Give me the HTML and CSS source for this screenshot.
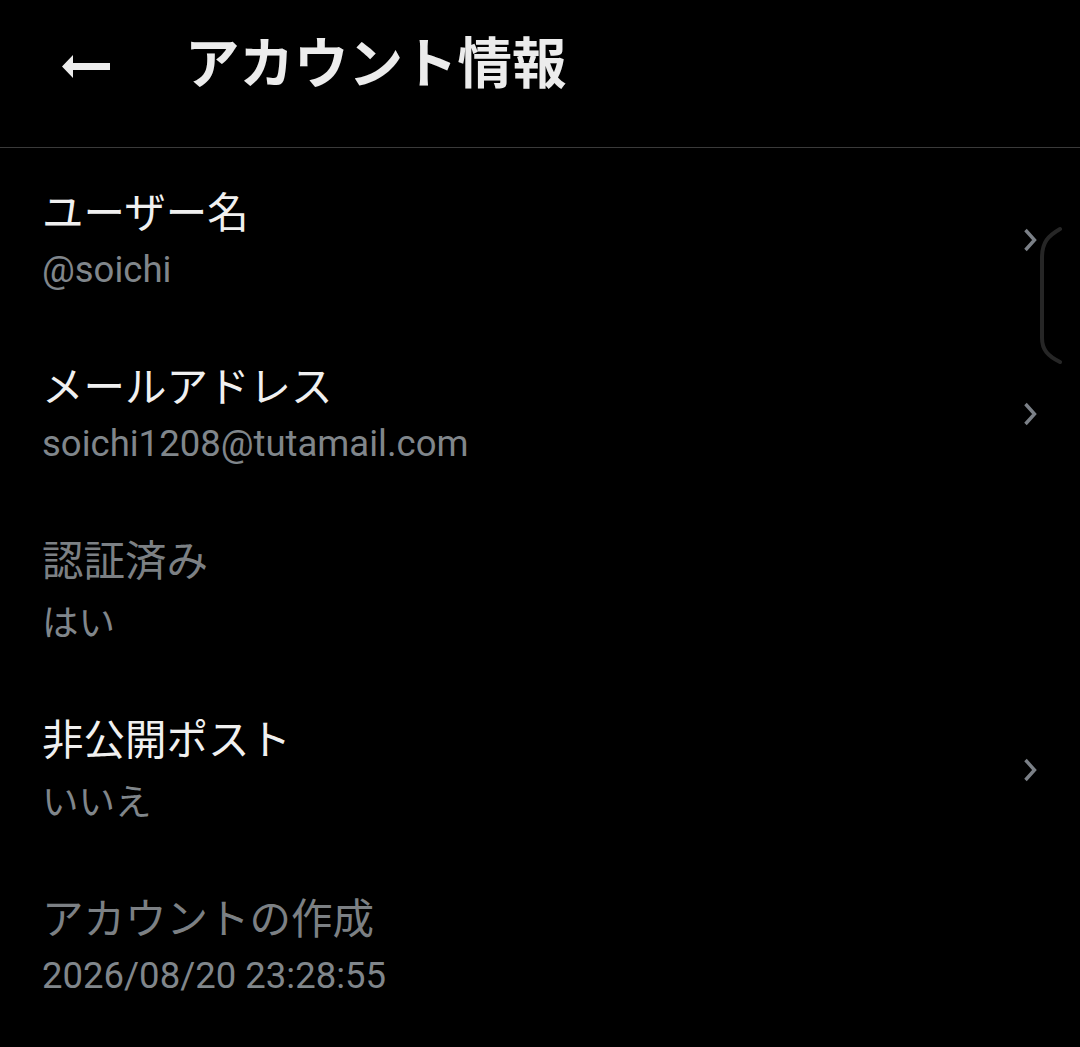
FILE: index.html
```html
<!DOCTYPE html>
<html lang="ja">
<head>
<meta charset="utf-8">
<title>アカウント情報</title>
<link rel="stylesheet" href="styles.css">
</head>
<body>
<div class="screen">
  <header class="appbar">
    <button class="back" aria-label="戻る">
      <svg width="48" height="24" viewBox="0 0 48 24"><path d="M0 11.5 L11 0 L11 8 L48 8 L48 15 L11 15 L11 23 Z" fill="#ececec"/></svg>
    </button>
    <h1 class="appbar-title">アカウント情報</h1>
  </header>
  <ul class="list">
    <li class="row">
      <div class="text">
        <div class="label">ユーザー名</div>
        <div class="value">@soichi</div>
      </div>
      <svg class="chev" width="14" height="24" viewBox="0 0 14 24"><path d="M2.5 2 L11.5 12 L2.5 22" fill="none" stroke="#7b8087" stroke-width="3.4"/></svg>
    </li>
    <li class="row">
      <div class="text">
        <div class="label">メールアドレス</div>
        <div class="value">soichi1208@tutamail.com</div>
      </div>
      <svg class="chev" width="14" height="24" viewBox="0 0 14 24"><path d="M2.5 2 L11.5 12 L2.5 22" fill="none" stroke="#7b8087" stroke-width="3.4"/></svg>
    </li>
    <li class="row">
      <div class="text">
        <div class="label label--disabled">認証済み</div>
        <div class="value value--jp">はい</div>
      </div>
    </li>
    <li class="row">
      <div class="text">
        <div class="label">非公開ポスト</div>
        <div class="value value--jp">いいえ</div>
      </div>
      <svg class="chev" width="14" height="24" viewBox="0 0 14 24"><path d="M2.5 2 L11.5 12 L2.5 22" fill="none" stroke="#7b8087" stroke-width="3.4"/></svg>
    </li>
    <li class="row">
      <div class="text">
        <div class="label label--disabled">アカウントの作成</div>
        <div class="value">2026/08/20 23:28:55</div>
      </div>
    </li>
  </ul>
  <svg class="edge-handle" width="28" height="140" viewBox="0 0 28 140"><path d="M22 3 C10 10 4 16 4 32 L4 112 C4 124 10 130 22 136" fill="none" stroke="#262626" stroke-width="4" stroke-linecap="round"/></svg>
</div>
</body>
</html>
```
FILE: styles.css
```css
html, body {
  margin: 0;
  padding: 0;
  background: #000;
}
body {
  width: 1080px;
  height: 1047px;
  overflow: hidden;
  font-family: "Noto Sans CJK JP", "Noto Sans", sans-serif;
}
.screen {
  position: relative;
  width: 1080px;
  height: 1047px;
  background: #000;
}
.appbar {
  display: flex;
  align-items: center;
  height: 148px;
  padding-left: 62px;
  padding-bottom: 18px;
  border-bottom: 1.5px solid #3a3a3a;
  box-sizing: border-box;
}
.back {
  display: flex;
  align-items: center;
  padding: 0;
  margin: 4px 0 0 0;
  border: none;
  background: none;
  width: 48px;
  height: 24px;
}
.appbar-title {
  margin: 0 0 8px 75px;
  font-size: 54.5px;
  font-weight: 700;
  color: #ececec;
  line-height: 1;
  letter-spacing: 0;
}
.list {
  list-style: none;
  margin: 0;
  padding: 4px 0 0 0;
}
.row {
  display: flex;
  align-items: center;
  justify-content: space-between;
  padding: 29px 44px 27px 42px;
}
.label {
  font-family: "Noto Sans CJK JP", sans-serif;
  font-size: 41.5px;
  line-height: 58px;
  color: #f0f0f0;
}
.label--disabled {
  color: #7c8084;
}
.value {
  margin-top: 2px;
  font-family: Roboto, "Noto Sans CJK JP", sans-serif;
  font-size: 36.5px;
  line-height: 58px;
  color: #80868b;
}
.value--jp {
  font-family: "Noto Sans CJK JP", sans-serif;
  line-height: 63px;
}
.chev {
  display: block;
  margin-right: -1px;
}
.edge-handle {
  position: absolute;
  right: 14px;
  top: 226px;
}
```
